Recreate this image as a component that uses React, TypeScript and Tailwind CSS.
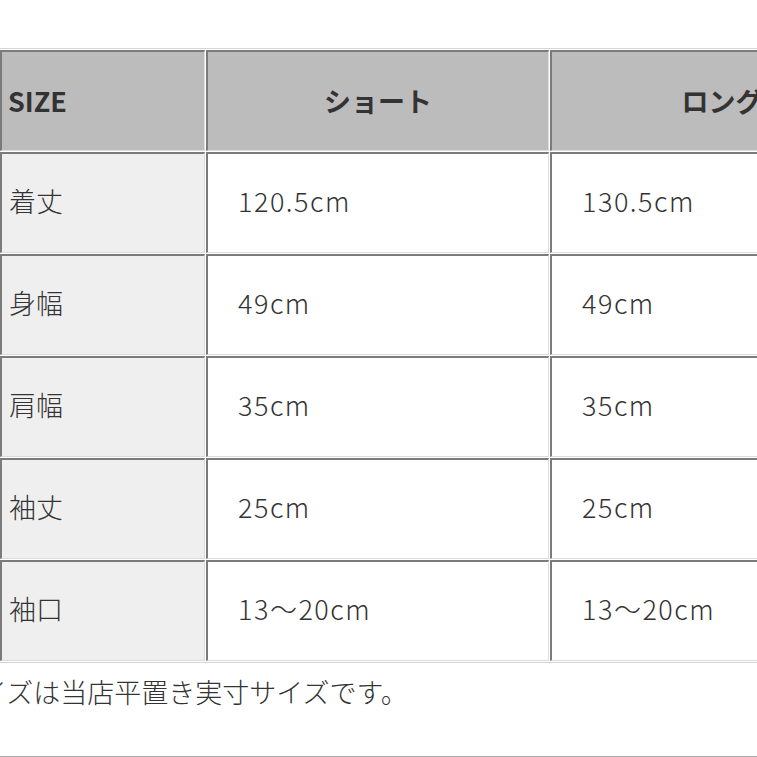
const FONT = "font-['Noto_Sans_CJK_JP','Noto_Sans',sans-serif]";

const rows = [
  { label: "着丈", short: "120.5cm", long: "130.5cm" },
  { label: "身幅", short: "49cm", long: "49cm" },
  { label: "肩幅", short: "35cm", long: "35cm" },
  { label: "袖丈", short: "25cm", long: "25cm" },
  { label: "袖口", short: "13〜20cm", long: "13〜20cm" },
];

const cell = "h-[101px] border-t-2 border-l-2 border-[#7b7b7b] border-r border-b border-r-[#dcdcdc] border-b-[#dcdcdc] flex items-center";

export default function App() {
  return (
    <div className={`w-[757px] h-[757px] overflow-hidden bg-white text-[#333] ${FONT}`}>
      <div className="mt-[48px] w-[1100px] border-t border-b border-[#d4d4d4] py-[1px] flex flex-col gap-[1px]">
        {/* 見出し */}
        <div className="flex gap-[1px]">
          <div className={`${cell} w-[205px] border-l-0 bg-[#bcbcbc] pl-[6px] text-[27px] font-bold`}>SIZE</div>
          <div className={`${cell} w-[343px] bg-[#bcbcbc] justify-center text-[27px] font-bold`}>ショート</div>
          <div className={`${cell} w-[343px] bg-[#bcbcbc] justify-center text-[27px] font-bold`}>ロング</div>
        </div>
        {rows.map((r) => (
          <div key={r.label} className="flex gap-[1px]">
            <div className={`${cell} w-[205px] border-l-0 bg-[#efefef] pl-[7px] pb-[4px] text-[27px] font-light`}>{r.label}</div>
            <div className={`${cell} w-[343px] bg-white pl-[30px] pb-[4px] text-[27px] font-light tracking-[1.5px]`}>{r.short}</div>
            <div className={`${cell} w-[343px] bg-white pl-[30px] pb-[4px] text-[27px] font-light tracking-[1.5px]`}>{r.long}</div>
          </div>
        ))}
      </div>
      <div className="h-[58px] flex items-center -ml-[47px] text-[27px] font-light whitespace-nowrap">
        サイズは当店平置き実寸サイズです。
      </div>
      <div className="mt-[35px] h-[2px] bg-[#a8a8a8]" />
    </div>
  );
}
